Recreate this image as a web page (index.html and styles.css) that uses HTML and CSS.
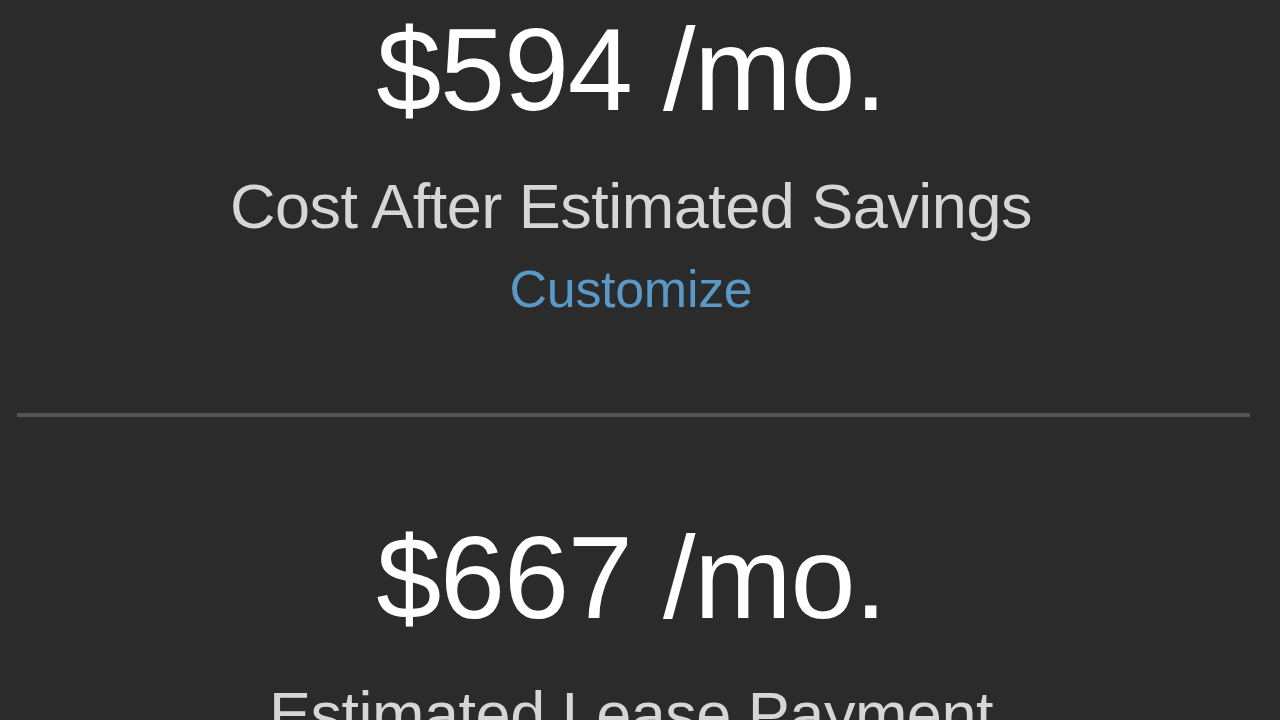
FILE: index.html
```html
<!DOCTYPE html>
<html lang="en">
<head>
<meta charset="utf-8">
<title>Lease cost</title>
<link rel="stylesheet" href="styles.css">
</head>
<body>
<main class="page">
  <section class="block block-first">
    <div class="price">$594 /mo.</div>
    <div class="label">Cost After Estimated Savings</div>
    <a class="link" href="#">Customize</a>
  </section>
  <hr class="divider">
  <section class="block block-second">
    <div class="price">$667 /mo.</div>
    <div class="label">Estimated Lease Payment</div>
  </section>
</main>
</body>
</html>
```

FILE: styles.css
```css
html, body {
  margin: 0;
  padding: 0;
  background: #2b2b2b;
  height: 100%;
  overflow: hidden;
}

.page {
  font-family: "Liberation Sans", Arial, sans-serif;
  padding-top: 11px;
}

.block {
  display: flex;
  flex-direction: column;
  align-items: center;
  text-align: center;
  padding-right: 18px;
}

.block-first {
  padding-bottom: 98px;
}

.block-second {
  padding-top: 102px;
}

.price {
  font-size: 117px;
  line-height: 1;
  letter-spacing: -1.2px;
  color: #ffffff;
  margin-bottom: 47px;
}

.label {
  font-size: 63px;
  line-height: 1;
  letter-spacing: -0.5px;
  color: #d6d6d6;
}

.block-first .label {
  margin-bottom: 25px;
}

.link {
  font-size: 52px;
  line-height: 1;
  letter-spacing: -0.3px;
  color: #5a98c6;
  text-decoration: none;
}

.divider {
  border: 0;
  height: 4px;
  background: #555555;
  margin: 0 30px 0 17px;
}
```
